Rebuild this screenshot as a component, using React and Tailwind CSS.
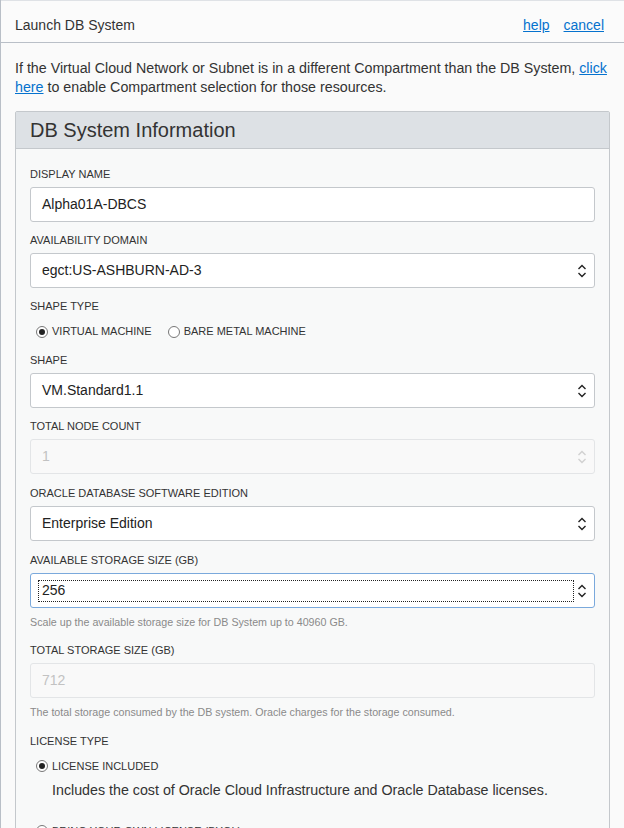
import React from 'react';

const Chevrons = ({ faded }) => (
  <svg width="10" height="14" viewBox="0 0 10 14" className={faded ? 'text-[#d0d0d0]' : 'text-[#222]'}>
    <path d="M1.5 5 L5 1.5 L8.5 5" fill="none" stroke="currentColor" strokeWidth="1.4" />
    <path d="M1.5 9 L5 12.5 L8.5 9" fill="none" stroke="currentColor" strokeWidth="1.4" />
  </svg>
);

const Label = ({ children }) => (
  <div className="text-[11px] leading-[13px] text-[#333] uppercase">{children}</div>
);

const Field = ({ label, children, help, className = '' }) => (
  <div className={`flex flex-col ${className}`}>
    <Label>{label}</Label>
    <div className="mt-[6px]">{children}</div>
    {help && <div className="mt-[8px] text-[10.7px] leading-[13px] text-[#8a8a8a]">{help}</div>}
  </div>
);

const TextBox = ({ value }) => (
  <div className="h-[35px] bg-white border border-[#c4c8cc] rounded-[3px] flex items-center px-[11px] text-[14px] text-[#222]">
    {value}
  </div>
);

const DisabledBox = ({ value, spinner }) => (
  <div className="h-[35px] bg-[#f9f9f9] border border-[#e3e5e7] rounded-[3px] flex items-center justify-between pl-[11px] pr-[7px] text-[14px] text-[#c2c2c2]">
    <span>{value}</span>
    {spinner && <Chevrons faded />}
  </div>
);

const SelectBox = ({ value }) => (
  <div className="h-[35px] bg-white border border-[#c4c8cc] rounded-[3px] flex items-center justify-between pl-[11px] pr-[7px] text-[14px] text-[#222]">
    <span>{value}</span>
    <Chevrons />
  </div>
);

const Radio = ({ checked, label }) => (
  <label className="flex items-center gap-[4px] text-[11px] text-[#333]">
    <span className="w-[12px] h-[12px] rounded-full border border-[#777] bg-white flex items-center justify-center">
      {checked && <span className="w-[6px] h-[6px] rounded-full bg-[#222]" />}
    </span>
    {label}
  </label>
);

export default function App() {
  return (
    <div className="w-[624px] h-[828px] overflow-hidden bg-[#fafafa] border-l border-[#b9bfc7] font-['Liberation_Sans',Arial,sans-serif] text-[#333]">
      <div className="h-[43px] pt-[7px] flex items-center justify-between pl-[14px] pr-[20px] border-b border-[#b9bfc7] border-t border-t-[#dfe2e6] bg-[#fbfbfb]">
        <span className="text-[14px] text-[#333]">Launch DB System</span>
        <div className="flex gap-[14px] text-[14px]">
          <a className="text-[#0572ce] underline">help</a>
          <a className="text-[#0572ce] underline">cancel</a>
        </div>
      </div>

      <p className="px-[14px] pt-[16px] text-[14.25px] leading-[19px] text-[#333]">
        If the Virtual Cloud Network or Subnet is in a different Compartment than the DB System,{' '}
        <a className="text-[#0572ce] underline">click here</a> to enable Compartment selection for those resources.
      </p>

      <div className="mt-[14px] ml-[14px] w-[595px] border border-[#c4c8cc] rounded-t-[2px]">
        <div className="h-[37px] bg-[#dde1e5] border-b border-[#c4c8cc] flex items-center px-[14px] text-[20px] text-[#333]">
          DB System Information
        </div>
        <div className="bg-[#f8f9f9] px-[14px] pt-[19px] pb-[20px] flex flex-col gap-[12px]">
          <Field label="Display Name">
            <TextBox value="Alpha01A-DBCS" />
          </Field>
          <Field label="Availability Domain">
            <SelectBox value="egct:US-ASHBURN-AD-3" />
          </Field>
          <div className="flex flex-col">
            <Label>Shape Type</Label>
            <div className="mt-[8px] ml-[6px] flex gap-[16px] h-[21px] items-center">
              <Radio checked label="VIRTUAL MACHINE" />
              <Radio label="BARE METAL MACHINE" />
            </div>
          </div>
          <Field label="Shape">
            <SelectBox value="VM.Standard1.1" />
          </Field>
          <Field label="Total Node Count">
            <DisabledBox value="1" spinner />
          </Field>
          <Field label="Oracle Database Software Edition" className="mt-[1px]">
            <SelectBox value="Enterprise Edition" />
          </Field>
          <Field label="Available Storage Size (GB)" className="mt-[1px]" help="Scale up the available storage size for DB System up to 40960 GB.">
            <div className="h-[35px] bg-white border border-[#7aa9dc] rounded-[3px] flex items-center pl-[7px] pr-[7px] text-[14px] text-[#222]">
              <div className="flex-1 h-[22px] border border-dotted border-[#222] flex items-center pl-[3px]">256</div>
              <div className="ml-[3px]"><Chevrons /></div>
            </div>
          </Field>
          <Field label="Total Storage Size (GB)" className="mt-[3px]" help="The total storage consumed by the DB system. Oracle charges for the storage consumed.">
            <DisabledBox value="712" />
          </Field>
          <div className="flex flex-col mt-[4px]">
            <Label>License Type</Label>
            <div className="mt-[10px] ml-[6px]">
              <Radio checked label="LICENSE INCLUDED" />
              <div className="ml-[16px] mt-[7px] text-[14.25px] leading-[17px] text-[#333]">
                Includes the cost of Oracle Cloud Infrastructure and Oracle Database licenses.
              </div>
            </div>
            <div className="mt-[24px] ml-[6px]">
              <Radio label="BRING YOUR OWN LICENSE (BYOL)" />
            </div>
          </div>
        </div>
      </div>
    </div>
  );
}
